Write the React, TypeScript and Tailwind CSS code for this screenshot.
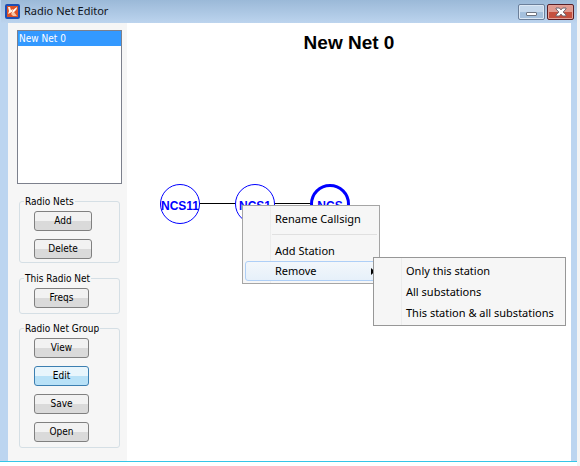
import { useState } from 'react';
import clsx from 'clsx';

const NETS = ['New Net 0'];

const GROUPS = [
  { title: 'Radio Nets', actions: ['Add', 'Delete'], width: 'w-[58px]', box: 'h-[68px] mt-[11px]' },
  { title: 'This Radio Net', actions: ['Freqs'], width: 'w-[55px]', box: 'h-[42px] mt-[9px]' },
  { title: 'Radio Net Group', actions: ['View', 'Edit', 'Save', 'Open'], width: 'w-[55px]', box: 'h-[126px] mt-[8px]' },
];

const STATIONS = [
  { name: 'NCS11', x: 53, width: 1 },
  { name: 'NCS1', x: 128, width: 1 },
  { name: 'NCS', x: 203, width: 3 },
];

const REMOVE_ITEMS = ['Only this station', 'All substations', 'This station & all substations'];

function AppIcon() {
  return (
    <svg viewBox="0 0 15 15" className="size-[15px]" aria-hidden="true">
      <rect width="15" height="15" rx="2" fill="#1d4fb4" />
      <rect x="2" y="2" width="11" height="11" fill="#dd5126" />
      <path d="M3 3h2l1 3 2-1-1 3-4 2 1-3z" fill="#fff3e4" />
      <path d="M12 3v2L9 8l3 4H8L6 10l2-3z" fill="#f7c3a2" />
      <path d="M12 3L8 6 7 9l3-2z" fill="#fff" />
    </svg>
  );
}

function TitleBar() {
  return (
    <header className="flex h-[23px] shrink-0 items-start bg-linear-to-b from-[#9bb9d8] to-[#bcd4ee] pl-1">
      <div className="flex flex-1 items-center gap-1 pt-[2px]">
        <AppIcon />
        <h1 className="text-[11px] leading-[18px] text-[#10141c]">Radio Net Editor</h1>
      </div>
      <div className="flex gap-[2px] pt-1 pr-[3px]">
        <button
          aria-label="Minimize"
          className="flex h-4 w-[27px] items-center justify-center rounded-[2px] border border-[#6b7f9a] bg-linear-to-b from-[#c5d8ec] from-50% to-[#a4c0dd] to-50% shadow-[inset_0_0_0_1px_#dce8f5]"
        >
          <svg viewBox="0 0 11 4" className="mt-1 h-1 w-[11px]" aria-hidden="true">
            <rect x="0.5" y="0.5" width="10" height="3" rx="0.5" fill="#fff" stroke="#6d7480" />
          </svg>
        </button>
        <button
          aria-label="Close"
          className="flex h-4 w-[27px] items-center justify-center rounded-[2px] border border-[#571e26] bg-linear-to-b from-[#df9a90] from-50% to-[#c5503f] to-50% shadow-[inset_0_0_0_1px_#e3a198]"
        >
          <svg viewBox="0 0 12 10" className="h-[10px] w-3" aria-hidden="true">
            <path
              d="M1 1h3.400L6 2.900 7.600 1H11v1L8.200 5 11 8v1H7.600L6 7.100 4.400 9H1V8l2.800-3L1 2z"
              fill="#fff"
              stroke="#6f6670"
            />
          </svg>
        </button>
      </div>
    </header>
  );
}

function Sidebar() {
  const [active, setActive] = useState('Edit');

  return (
    <aside className="w-[119px] shrink-0 bg-[#f6f6f6] pt-[7px] pr-[5px] pl-[9px] font-['DejaVu_Sans_Condensed','Noto_Sans',sans-serif] text-[10px]">
      <select
        size={2}
        defaultValue={NETS[0]}
        aria-label="Radio nets"
        className="block h-[154px] w-full appearance-none overflow-hidden border border-[#7c808c] bg-white"
      >
        {NETS.map((net) => (
          <option
            key={net}
            value={net}
            className="h-[15px] min-h-0 bg-[#3399ff] bg-linear-to-b from-[#3399ff] to-[#3399ff] px-[1px] pt-[2px] pb-0 text-white checked:text-white"
          >
            {net}
          </option>
        ))}
      </select>
      {GROUPS.map((group) => (
        <fieldset
          key={group.title}
          className={clsx('mr-[2px] ml-[2px] rounded-[3px] border border-[#d5dfe5] pl-[14px]', group.box)}
        >
          <legend className="-ml-[10px] px-[1px] leading-[13px] whitespace-nowrap text-black">{group.title}</legend>
          <div className="flex flex-col gap-2 pt-[3px]">
            {group.actions.map((action) => (
              <button
                key={action}
                onClick={() => setActive(action)}
                className={clsx(
                  'h-5 rounded-[3px] border text-center leading-[18px] text-black',
                  group.width,
                  active === action
                    ? 'border-[#3c7fb1] bg-linear-to-b from-[#e8f5fc] from-50% to-[#b8e1f7] to-50%'
                    : 'border-[#808080] bg-linear-to-b from-[#f2f2f2] from-50% to-[#dadada] to-50%',
                )}
              >
                {action}
              </button>
            ))}
          </div>
        </fieldset>
      ))}
    </aside>
  );
}

function StationMap() {
  return (
    <svg className="absolute top-[160px] left-0 h-[44px] w-[240px]" viewBox="0 0 240 44">
      <path d="M53 20.500H203" stroke="#000" />
      {STATIONS.map((s) => (
        <g key={s.name}>
          <circle cx={s.x} cy="21" r={s.width > 1 ? 18.5 : 19.5} fill="#fff" stroke="#0000ff" strokeWidth={s.width} />
          <text x={s.x} y="27" textAnchor="middle" fill="#0000ff" className="font-['Liberation_Sans',sans-serif] text-[12px] font-bold">
            {s.name}
          </text>
        </g>
      ))}
    </svg>
  );
}

function ContextMenu() {
  const item = 'block w-full pl-[30px] text-left whitespace-nowrap';

  return (
    <div
      role="menu"
      className="absolute top-[182px] left-[115px] w-[138px] border border-[#a5a5a5] bg-[#f6f6f6] bg-linear-to-r from-transparent from-[27px] via-[#e2e3e3] via-[27px] to-transparent to-[28px] p-[2px] text-[11px] leading-[18px] text-black"
    >
      <button role="menuitem" className={clsx(item, 'h-[22px]')}>Rename Callsign</button>
      <div role="separator" className="mt-1 mb-[5px] ml-[27px] border-t border-[#e0e0e0]" />
      <button role="menuitem" className={clsx(item, 'h-[21px]')}>Add Station</button>
      <button
        role="menuitem"
        aria-haspopup="menu"
        className="flex h-5 w-full items-center justify-between rounded-[3px] border border-[#aecff7] bg-linear-to-b from-[#f3f7fb] to-[#e6f0fa] pr-[1px] pl-[29px]"
      >
        Remove
        <svg viewBox="0 0 4 7" className="h-[7px] w-1" aria-hidden="true">
          <path d="M0 0l4 3.500-4 3.500z" />
        </svg>
      </button>
      <div
        role="menu"
        className="absolute top-[51px] left-[130px] w-[193px] border border-[#979797] bg-[#f6f6f6] bg-linear-to-r from-transparent from-[27px] via-[#e2e3e3] via-[27px] to-transparent to-[28px] p-[2px]"
      >
        {REMOVE_ITEMS.map((label) => (
          <button key={label} role="menuitem" className={clsx(item, 'h-[21px]')}>{label}</button>
        ))}
      </div>
    </div>
  );
}

export default function App() {
  return (
    <div className="flex h-screen flex-col bg-[#f4f4f4] pr-[3px] font-['Noto_Sans',sans-serif]">
      <div className="flex min-h-0 flex-1 flex-col border-b border-[#35c5e8] bg-[#bcd5f0] pl-[1px]">
        <TitleBar />
        <div className="mr-[6px] ml-[7px] flex min-h-0 flex-1">
          <Sidebar />
          <main className="relative flex-1 bg-white">
            <h2 className="pt-2 text-center font-['Liberation_Sans',sans-serif] text-[19px] leading-[24px] font-bold text-black">
              New Net 0
            </h2>
            <StationMap />
            <ContextMenu />
          </main>
        </div>
      </div>
      <div className="h-1 shrink-0 bg-white" />
    </div>
  );
}
